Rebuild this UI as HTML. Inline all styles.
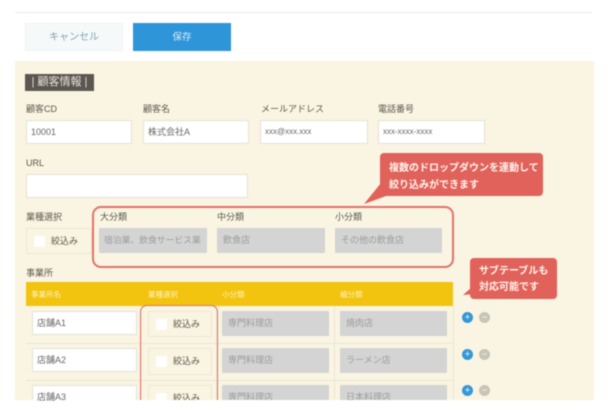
<!DOCTYPE html>
<html lang="ja"><head><meta charset="utf-8">
<style>
html,body{margin:0;padding:0;background:#fff}
body{width:616px;height:416px;position:relative;overflow:hidden;font-family:"Liberation Sans","Noto Sans CJK JP",sans-serif;color:#555}
#w{position:absolute;left:0;top:0;width:616px;height:416px;filter:blur(.55px)}
#w div,#w span.a{position:absolute;box-sizing:border-box;white-space:nowrap}
.l{font-size:9px;line-height:12px;color:#5d574f}
.i{background:#fff;border:1px solid #e4e1d6;font-size:9px;color:#666;padding-left:4px;height:24px;line-height:22px}
.g{background:#d3d4d3;font-size:9px;color:#9b9c9c;padding-left:6px;line-height:25px;border-radius:1px}
.c{border:1px solid #ece6d3;font-size:9px;color:#5d574f;}
.c b{position:absolute;left:7px;top:7px;width:11px;height:11px;background:#fff;border-radius:1px}
.c span{position:absolute;left:24px;top:0;line-height:25px;font-weight:normal}
.h{color:#fff4c4;font-size:7.5px;line-height:10px;top:290px}
.p,.m{width:11px;height:11px;border-radius:50%;color:#fff;font-size:9px;line-height:10px;text-align:center}
.p{background:#3597d6}.m{background:#c7c5b6}
.bb{background:#e0625b;color:#fff5ee;font-size:10px;line-height:17px;border-radius:4px;font-weight:bold}
.ln{background:#ebe6d4}
</style></head><body><div id="w">
<div style="left:15px;top:12px;width:577px;height:1px;background:#e9ebeb"></div>
<div style="left:25px;top:23px;width:98px;height:28px;background:#f6f9fa;border:1px solid #f0f3f4;color:#7fa3b5;font-size:10px;line-height:28px;text-align:center">キャンセル</div>
<div style="left:133px;top:23px;width:98px;height:28px;background:#2e95d9;color:#d6ecf8;font-size:9.5px;line-height:29px;text-align:center">保存</div>

<div style="left:15px;top:61px;width:579px;height:339px;background:#faf4e2;overflow:hidden"></div>
<div style="left:25px;top:74px;width:69px;height:17px;background:#5c5650;color:#e4e0da;font-size:11px;line-height:16px;text-align:center">| 顧客情報 |</div>

<div class="l" style="left:26px;top:103px">顧客CD</div>
<div class="l" style="left:143px;top:103px">顧客名</div>
<div class="l" style="left:261px;top:103px">メールアドレス</div>
<div class="l" style="left:378px;top:103px">電話番号</div>
<div class="i" style="left:26px;top:120px;width:106px">10001</div>
<div class="i" style="left:143px;top:120px;width:106px">株式会社A</div>
<div class="i" style="left:260px;top:120px;width:108px;font-size:8px">xxx@xxx.xxx</div>
<div class="i" style="left:378px;top:120px;width:107px;font-size:8px">xxx-xxxx-xxxx</div>
<div class="l" style="left:26px;top:157px">URL</div>
<div class="i" style="left:26px;top:174px;width:222px"></div>

<div class="l" style="left:26px;top:211px">業種選択</div>
<div class="c" style="left:26px;top:228px;width:66px;height:26px"><b></b><span>絞込み</span></div>
<div class="l" style="left:100px;top:211px">大分類</div>
<div class="l" style="left:217px;top:211px">中分類</div>
<div class="l" style="left:335px;top:211px">小分類</div>
<div class="g" style="left:99px;top:228px;width:108px;height:25px;overflow:hidden;padding-left:5px;font-size:8.8px">宿泊業、飲食サービス業</div>
<div class="g" style="left:217px;top:228px;width:108px;height:25px">飲食店</div>
<div class="g" style="left:335px;top:228px;width:107px;height:25px">その他の飲食店</div>
<div style="left:92px;top:206px;width:362px;height:62px;border:2px solid #e0736b;border-radius:9px"></div>

<div class="l" style="left:26px;top:267px">事業所</div>
<div style="left:26px;top:282px;width:427px;height:24px;background:#f2c30f"></div>
<div class="h" style="left:31px">事業所名</div>
<div class="h" style="left:148px">業種選択</div>
<div class="h" style="left:222px">小分類</div>
<div class="h" style="left:340px">細分類</div>

<div class="ln" style="left:26px;top:343px;width:427px;height:1px"></div>
<div class="ln" style="left:26px;top:380px;width:427px;height:1px"></div>
<div class="ln" style="left:453px;top:306px;width:1px;height:94px"></div>
<div class="ln" style="left:334px;top:306px;width:1px;height:94px"></div>
<div class="ln" style="left:216px;top:306px;width:1px;height:94px"></div>
<div class="ln" style="left:141px;top:306px;width:1px;height:94px"></div>

<div class="i" style="left:32px;top:311px;width:105px">店舗A1</div>
<div class="i" style="left:32px;top:348px;width:105px">店舗A2</div>
<div class="i" style="left:32px;top:385px;width:105px;height:15px;border-bottom:0">店舗A3</div>

<div class="c" style="left:148px;top:311px;width:64px;height:26px"><b></b><span>絞込み</span></div>
<div class="c" style="left:148px;top:348px;width:64px;height:27px"><b></b><span>絞込み</span></div>
<div class="c" style="left:148px;top:385px;width:64px;height:15px;overflow:hidden;border-bottom:0"><b></b><span>絞込み</span></div>

<div class="g" style="left:222px;top:311px;width:107px;height:25px">専門料理店</div>
<div class="g" style="left:222px;top:348px;width:107px;height:25px">専門料理店</div>
<div class="g" style="left:222px;top:385px;width:107px;height:15px;overflow:hidden">専門料理店</div>
<div class="g" style="left:340px;top:311px;width:107px;height:25px">焼肉店</div>
<div class="g" style="left:340px;top:348px;width:107px;height:25px">ラーメン店</div>
<div class="g" style="left:340px;top:385px;width:107px;height:15px;overflow:hidden">日本料理店</div>

<div style="left:140px;top:305px;width:78px;height:95px;border:1.5px solid #e0736b;border-bottom:0;border-radius:7px 7px 0 0"></div>

<div class="p" style="left:462px;top:312px">+</div><div class="m" style="left:479px;top:312px">−</div>
<div class="p" style="left:462px;top:349px">+</div><div class="m" style="left:479px;top:349px">−</div>
<div class="p" style="left:462px;top:385px">+</div><div class="m" style="left:479px;top:385px">−</div>

<svg style="position:absolute;left:0;top:0" width="616" height="416"><polygon points="381,183 364,204 386,196" fill="#e0625b"/><polygon points="472,287 463,295 474,294" fill="#e0625b"/></svg>
<div class="bb" style="left:380px;top:153px;width:163px;height:43px;padding:7px 0 0 9px">複数のドロップダウンを連動して<br>絞り込みができます</div>
<div class="bb" style="left:470px;top:258px;width:87px;height:41px;padding:6px 0 0 9px;line-height:16px">サブテーブルも<br>対応可能です</div>
</div></body></html>
